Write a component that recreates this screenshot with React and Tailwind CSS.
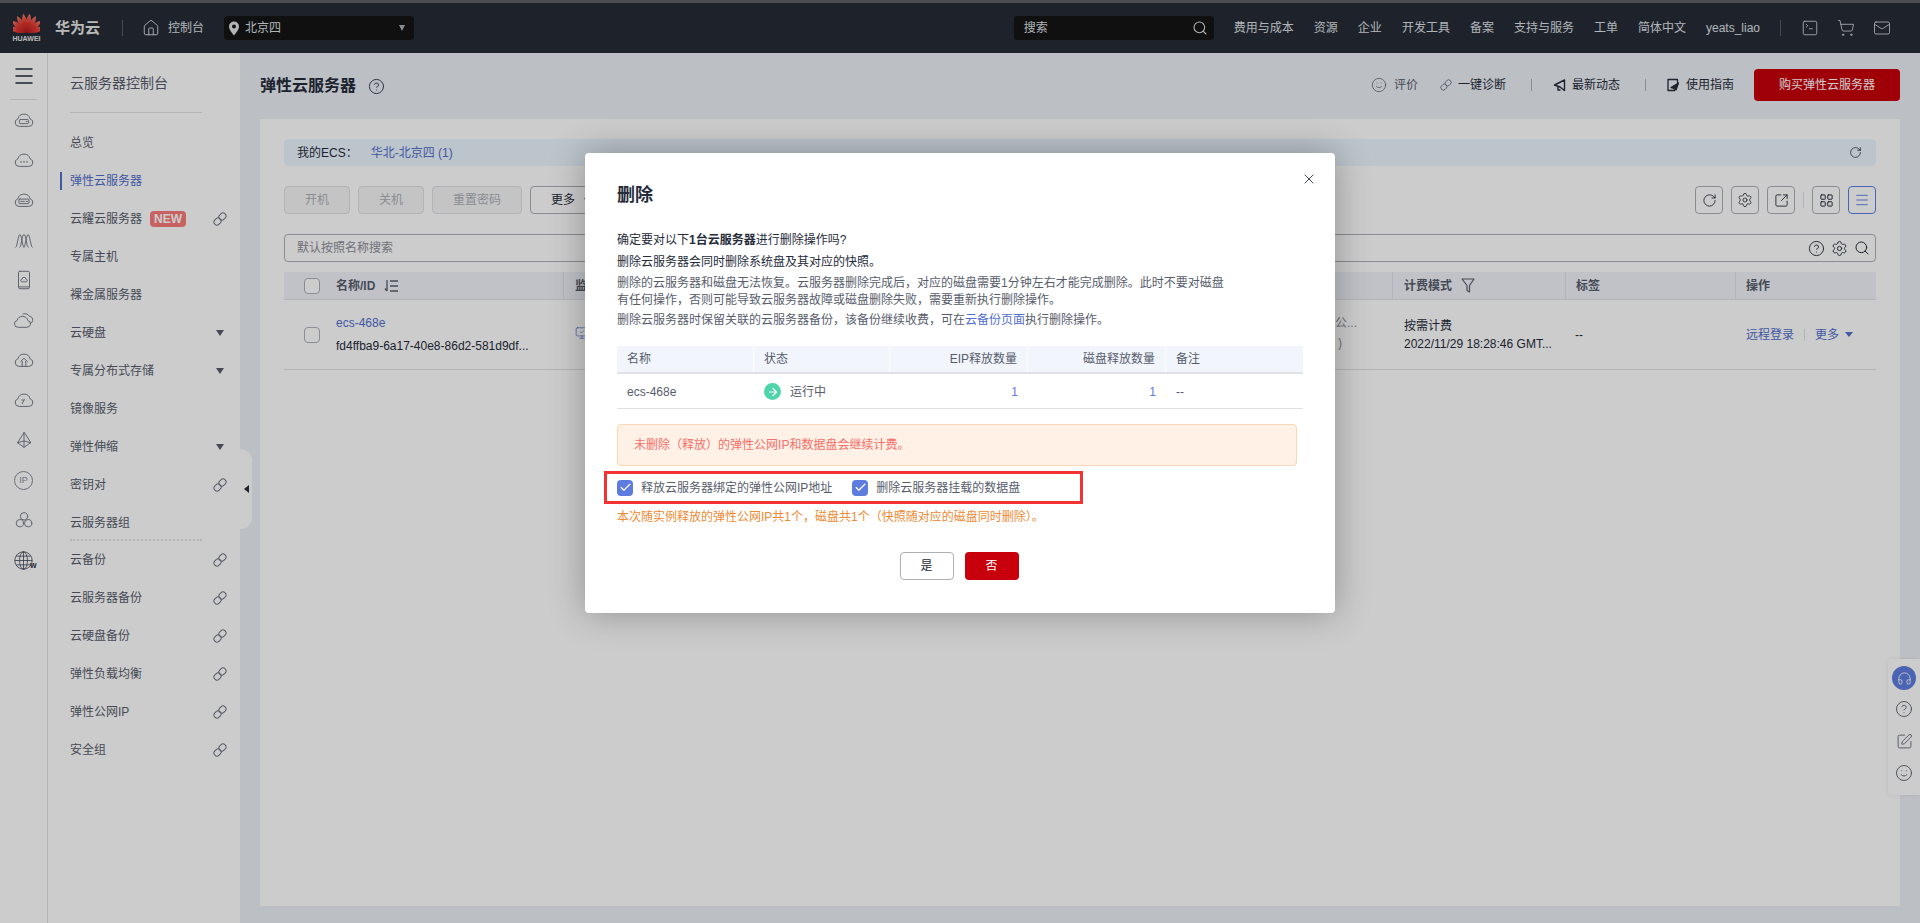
import { Home, Search, SquareTerminal, ShoppingCart, Mail, CircleHelp, Smile, RotateCw, Settings, SquareArrowOutUpRight, LayoutGrid, Menu, X, Check, ArrowRight, Headphones, SquarePen, MonitorCheck } from 'lucide-react';

const font = { fontFamily: '"Liberation Sans", "Noto Sans CJK SC", sans-serif' };

// full-width punctuation
const CM = '\uFF0C';
const LP = '\uFF08';
const RP = '\uFF09';
const CO = '\uFF1A';

const navItems = ['费用与成本', '资源', '企业', '开发工具', '备案', '支持与服务', '工单', '简体中文', 'yeats_liao'];

const sideItems = [
  { label: '总览' },
  { label: '弹性云服务器', active: true },
  { label: '云耀云服务器', badge: true, link: true },
  { label: '专属主机' },
  { label: '裸金属服务器' },
  { label: '云硬盘', arrow: true },
  { label: '专属分布式存储', arrow: true },
  { label: '镜像服务' },
  { label: '弹性伸缩', arrow: true },
  { label: '密钥对', link: true },
  { label: '云服务器组' },
];

const sideItems2 = [
  { label: '云备份', link: true },
  { label: '云服务器备份', link: true },
  { label: '云硬盘备份', link: true },
  { label: '弹性负载均衡', link: true },
  { label: '弹性公网IP', link: true },
  { label: '安全组', link: true },
];

const CLOUD = 'M6.5 19a4.2 4.2 0 0 1-1.2-8.2 6.9 6.9 0 0 1 13.4 0A4.2 4.2 0 0 1 17.5 19Z';

const railIcons = [
  <><path d={CLOUD} /><rect x="7" y="11.500" width="10" height="4.500" rx="1" /><path d="M14.500 13.700h1" /></>,
  <><path d={CLOUD} /><path d="M8.500 14h.6M11.700 14h.6M14.900 14h.6" strokeWidth="1.400" /></>,
  <><path d={CLOUD} /><rect x="6.500" y="11" width="11" height="5" rx="1" /><path d="M8.500 13.500h4M14.500 13.500h1.500" /></>,
  <path d="M3 20c2-1 2.500-14 4.500-14s2.500 14 4.500 14M7.500 20c2-1 2-14 4.500-14s2.500 14 4.500 14M12 20c1.500 0 2.500-14 4.500-14s2.500 13 4.500 14" />,
  <><rect x="6" y="2.500" width="12" height="19" rx="1.500" /><path d="M6 19.500h12" /><path d="M10 14a1.500 1.500 0 0 1 0-3 2 2 0 0 1 4 0 1.500 1.500 0 0 1 0 3Z" /></>,
  <><path d="M5.500 20a3.800 3.800 0 0 1-1-7.500 6 6 0 0 1 11.600 0 3.800 3.800 0 0 1-1 7.500Z" /><path d="M11 5.500a6 6 0 0 1 7 2.500 3.800 3.800 0 0 1 3.500 4.500 3 3 0 0 1-2.500 3" /></>,
  <><path d={CLOUD} /><path d="M8.500 13.500 12 10l3.500 3.500M10 13.500V19M14 13.500V19" /></>,
  <><path d={CLOUD} /><path d="m10 16 2.500-4.500M9.500 12h2" /></>,
  <path d="M12 4 5 15l7 5 7-5ZM12 4v16M5 15l7-2 7 2" />,
];

function RailIcon({ children }) {
  return (
    <div className="h-10 flex items-center justify-center">
      <svg width="22" height="22" viewBox="0 0 24 24" fill="none" stroke="#6c7280" strokeWidth="1" strokeLinejoin="round" strokeLinecap="round">
        {children}
      </svg>
    </div>
  );
}

function HuaweiLogo() {
  const angles = [-75, -52, -30, -10, 10, 30, 52, 75];
  return (
    <div className="w-[27px] flex flex-col items-center">
      <svg width="27" height="20" viewBox="0 0 27 20">
        <defs>
          <linearGradient id="petal" x1="0" y1="0" x2="0" y2="1">
            <stop offset="0" stopColor="#f0806a" />
            <stop offset="0.5" stopColor="#e0352f" />
            <stop offset="1" stopColor="#b01a22" />
          </linearGradient>
        </defs>
        {angles.map((a) => (
          <path key={a} d="M13.500 19.500C9.800 13 10.300 5.500 13.500 0.500 16.700 5.500 17.200 13 13.500 19.500Z" fill="url(#petal)" transform={`rotate(${a} 13.500 19.500)`} />
        ))}
      </svg>
      <span className="text-[7px] leading-[9px] text-[#e8e8e8] font-bold mt-[1px]">HUAWEI</span>
    </div>
  );
}

function LinkIcon({ size = 14, color = '#6c7280' }) {
  return (
    <svg width={size} height={size} viewBox="0 0 14 14" fill="none" stroke={color} strokeWidth="1">
      <rect x="6.500" y="0.800" width="6" height="7.500" rx="3" transform="rotate(45 9.500 4.500)" />
      <rect x="1.500" y="5.700" width="6" height="7.500" rx="3" transform="rotate(45 4.500 9.500)" />
    </svg>
  );
}

function SideRow({ item }) {
  return (
    <div className="h-[38px] flex items-center relative pl-[22px] pr-[13px]">
      {item.active && <span className="absolute left-3 top-[10px] w-[2px] h-[18px] bg-[#526ecc]" />}
      <span className={`text-xs ${item.active ? 'text-[#526ecc]' : 'text-[#575d6c]'}`}>{item.label}</span>
      {item.badge && <span className="ml-2 w-9 h-4 rounded-sm bg-[#fb7a7a] text-white text-xs font-bold flex items-center justify-center">NEW</span>}
      <span className="ml-auto flex items-center justify-center w-[14px]">
        {item.link && <LinkIcon />}
        {item.arrow && <span className="w-0 h-0 border-x-[4px] border-x-transparent border-t-[6px] border-t-[#575d6c]" />}
      </span>
    </div>
  );
}

function ToolBtn({ children, active }) {
  return (
    <button className={`w-7 h-7 flex items-center justify-center border rounded-sm ${active ? 'border-[#5e7ce0] text-[#5e7ce0]' : 'border-[#adb0b8] text-[#252b3a]'}`}>
      {children}
    </button>
  );
}

function Checkbox({ checked }) {
  if (checked) {
    return (
      <span className="w-4 h-4 rounded-sm bg-[#5e7ce0] flex items-center justify-center shrink-0">
        <Check size={13} strokeWidth={2.200} className="text-white" />
      </span>
    );
  }
  return <span className="w-4 h-4 rounded-sm border border-[#adb0b8] bg-white shrink-0" />;
}

export default function App() {
  return (
    <div className="relative h-[923px] w-[1920px] overflow-hidden flex flex-col bg-[#eceff5] text-xs text-[#252b3a]" style={font}>
      {/* top bar */}
      <header className="h-[53px] shrink-0 border-t-[3px] border-[#5f6166] bg-[#262b36] flex items-center text-[#dfe1e6]">
        <div className="ml-[13px]"><HuaweiLogo /></div>
        <span className="ml-[15px] text-[15px] font-bold text-[#e8e8e8]">华为云</span>
        <span className="ml-[22px] w-px h-4 bg-[#575d6c]" />
        <Home size={18} strokeWidth={1.200} className="ml-[19px]" />
        <span className="ml-2">控制台</span>
        <div className="ml-5 w-[190px] h-6 rounded-sm bg-[#141414] flex items-center pl-[4px] pr-[6px]">
          <svg width="12" height="15" viewBox="0 0 12 15">
            <path fillRule="evenodd" d="M6 0.500a5 5 0 0 1 5 5c0 3.500-5 9-5 9s-5-5.500-5-9a5 5 0 0 1 5-5Zm0 3a2 2 0 1 0 0 4 2 2 0 0 0 0-4Z" fill="#dfe1e6" />
          </svg>
          <span className="ml-[5px]">北京四</span>
          <span className="ml-auto mr-[3px] w-0 h-0 border-x-[3.500px] border-x-transparent border-t-[6px] border-t-[#adb0b8]" />
        </div>
        <div className="ml-auto w-[200px] h-6 rounded-sm bg-[#141414] flex items-center pl-[10px] pr-[6px]">
          <span>搜索</span>
          <Search size={16} strokeWidth={1.600} className="ml-auto" />
        </div>
        <nav className="ml-5 flex items-center gap-5">
          {navItems.map((n) => <span key={n}>{n}</span>)}
        </nav>
        <span className="ml-5 w-px h-4 bg-[#575d6c]" />
        <div className="ml-5 mr-[29px] flex items-center gap-[18px]">
          <SquareTerminal size={18} strokeWidth={1.100} />
          <ShoppingCart size={18} strokeWidth={1.100} />
          <Mail size={18} strokeWidth={1.100} />
        </div>
      </header>

      <div className="flex-1 flex min-h-0">
        {/* icon rail */}
        <aside className="w-12 shrink-0 bg-white border-r border-[#dfe1e6]">
          <div className="h-[47px] mx-[10px] border-b border-[#dfe1e6] flex items-center justify-center text-[#252b3a]">
            <Menu size={24} strokeWidth={1.500} />
          </div>
          {railIcons.map((icon, i) => <RailIcon key={i}>{icon}</RailIcon>)}
          <div className="h-10 flex items-center justify-center">
            <span className="w-[19px] h-[19px] rounded-full border border-[#8a8e99] text-[9px] text-[#8a8e99] flex items-center justify-center">IP</span>
          </div>
          <RailIcon><circle cx="12" cy="8" r="4" /><circle cx="7.500" cy="15.500" r="4" /><circle cx="16.500" cy="15.500" r="4" /></RailIcon>
          <div className="h-10 flex items-center justify-center relative">
            <svg width="19" height="19" viewBox="0 0 24 24" fill="none" stroke="#3c4252" strokeWidth="1">
              <circle cx="12" cy="12" r="11" />
              <ellipse cx="12" cy="12" rx="5" ry="11" />
              <path d="M1 12h22M3 6.500h18M3 17.500h18M12 1v22" />
            </svg>
            <span className="absolute left-[30px] top-[22px] text-[7px] leading-[8px] font-bold text-[#252b3a]">W</span>
          </div>
        </aside>

        {/* service menu */}
        <aside className="w-48 shrink-0 bg-white relative">
          <div className="h-[60px] ml-[22px] w-[132px] border-b border-[#dfe1e6] flex items-center text-sm text-[#575d6c]">云服务器控制台</div>
          <div className="mt-[11px]">
            {sideItems.map((s) => <SideRow key={s.label} item={s} />)}
            <div className="ml-[22px] w-[132px] -mt-[3px] border-t-2 border-dotted border-[#dfe1e6]" />
            {sideItems2.map((s) => <SideRow key={s.label} item={s} />)}
          </div>
          <div className="absolute left-full top-[396px] w-3 h-20 bg-white rounded-r-xl flex items-center justify-center">
            <span className="w-0 h-0 border-y-[4px] border-y-transparent border-r-[5px] border-r-[#252b3a]" />
          </div>
        </aside>

        {/* main */}
        <main className="flex-1 min-w-0 px-5">
          <div className="h-[66px] flex items-center">
            <h1 className="text-base font-bold">弹性云服务器</h1>
            <CircleHelp size={17} strokeWidth={1.400} className="ml-[12px] text-[#3c4252]" />
            <div className="ml-auto flex items-center text-[#252b3a] -mt-[2px]">
              <Smile size={16} strokeWidth={1.100} className="text-[#575d6c]" />
              <span className="ml-[7px] text-[#575d6c]">评价</span>
              <span className="ml-[22px]"><LinkIcon size={12} /></span>
              <span className="ml-[6px]">一键诊断</span>
              <span className="ml-[25px] w-px h-3 bg-[#adb0b8]" />
              <svg className="ml-[21px]" width="14" height="14" viewBox="0 0 14 14" fill="none" stroke="#252b3a" strokeWidth="1.400" strokeLinejoin="round">
                <path d="M1.500 7 11.500 2v10.500l-4.500-3.500L1.500 7ZM5 9v3h2.500" />
              </svg>
              <span className="ml-[5px]">最新动态</span>
              <span className="ml-[25px] w-px h-3 bg-[#adb0b8]" />
              <svg className="ml-5" width="14" height="14" viewBox="0 0 14 14" fill="none" stroke="#252b3a" strokeWidth="1.300" strokeLinejoin="round">
                <path d="M11.500 5V1.500h-9.500v11h7" />
                <path d="M5 9.500 12.500 5 10 12 7 10Z" fill="#252b3a" />
              </svg>
              <span className="ml-[6px]">使用指南</span>
              <button className="ml-5 w-[146px] h-8 rounded-sm bg-[#c7000b] text-white text-xs">购买弹性云服务器</button>
            </div>
          </div>

          <section className="h-[787px] bg-white px-6 pt-5">
            <div className="h-[27px] rounded-sm bg-[#ebf6ff] flex items-center pl-[13px] pr-[14px]">
              <span>我的ECS{CO}</span>
              <span className="ml-[13px] text-[#526ecc]">华北-北京四 (1)</span>
              <RotateCw size={13} strokeWidth={1.400} className="ml-auto" />
            </div>

            <div className="mt-5 h-7 flex items-center">
              <button className="w-[66px] h-7 border border-[#dfe1e6] rounded-sm bg-[#f5f5f6] text-[#adb0b8]">开机</button>
              <button className="ml-2 w-[66px] h-7 border border-[#dfe1e6] rounded-sm bg-[#f5f5f6] text-[#adb0b8]">关机</button>
              <button className="ml-2 w-[90px] h-7 border border-[#dfe1e6] rounded-sm bg-[#f5f5f6] text-[#adb0b8]">重置密码</button>
              <button className="ml-2 w-[76px] h-7 border border-[#adb0b8] rounded-sm flex items-center pl-5">
                更多
                <span className="ml-[9px] w-0 h-0 border-x-[3.500px] border-x-transparent border-t-[5px] border-t-[#575d6c]" />
              </button>
              <div className="ml-auto flex items-center gap-2">
                <ToolBtn><RotateCw size={15} strokeWidth={1.400} /></ToolBtn>
                <ToolBtn><Settings size={16} strokeWidth={1.200} /></ToolBtn>
                <ToolBtn><SquareArrowOutUpRight size={15} strokeWidth={1.400} /></ToolBtn>
                <span className="w-px h-4 bg-[#dfe1e6]" />
                <ToolBtn><LayoutGrid size={15} strokeWidth={1.600} /></ToolBtn>
                <ToolBtn active><Menu size={16} strokeWidth={1.400} /></ToolBtn>
              </div>
            </div>

            <div className="mt-5 h-7 border border-[#adb0b8] rounded-sm flex items-center pl-3 pr-[5px] text-[#8a8e99]">
              <span>默认按照名称搜索</span>
              <div className="ml-auto flex items-center gap-[6px] text-[#252b3a]">
                <CircleHelp size={17} strokeWidth={1.300} />
                <Settings size={17} strokeWidth={1.300} />
                <Search size={16} strokeWidth={1.500} />
              </div>
            </div>

            <div className="mt-[10px] grid grid-cols-[280px_828px_173px_170px_141px] h-7 bg-[#f0f3fa] text-[#575d6c] font-bold items-center border-b border-[#dfe1e6]">
              <div className="flex items-center pl-5 h-full border-r border-[#dfe1e6]">
                <Checkbox />
                <span className="ml-4">名称/ID</span>
                <svg className="ml-[9px]" width="15" height="14" viewBox="0 0 15 14" fill="none" stroke="#575d6c" strokeWidth="1.300">
                  <path d="M3 1v11M1 9.500 3 12M6 2h8M6 7h8M6 12h8" />
                </svg>
              </div>
              <div className="pl-[11px] h-full flex items-center">监控</div>
              <div className="pl-[11px] h-full flex items-center border-l border-[#dfe1e6]">
                计费模式
                <svg className="ml-[9px]" width="14" height="15" viewBox="0 0 14 15" fill="none" stroke="#575d6c" strokeWidth="1.200" strokeLinejoin="round">
                  <path d="M1 1h12L8.500 7.500V14L6 12.500V7.500Z" />
                </svg>
              </div>
              <div className="pl-[10px] h-full flex items-center border-l border-[#dfe1e6]">标签</div>
              <div className="pl-[10px] h-full flex items-center border-l border-[#dfe1e6]">操作</div>
            </div>

            <div className="grid grid-cols-[280px_828px_173px_170px_141px] h-[70px] border-b border-[#dfe1e6] items-center">
              <div className="flex items-center pl-5">
                <Checkbox />
                <div className="ml-4">
                  <div className="text-[#526ecc] leading-[16px]">ecs-468e</div>
                  <div className="mt-[7px] leading-[16px] whitespace-nowrap">fd4ffba9-6a17-40e8-86d2-581d9df...</div>
                </div>
              </div>
              <div className="h-full flex justify-between pl-[11px] pr-[35px]">
                <MonitorCheck size={14} strokeWidth={1.200} className="mt-[26px] text-[#526ecc]" />
                <div className="text-[#8a8e99] text-right pt-[15px] leading-[16px]">
                  <div>公...</div>
                  <div className="mt-1 pr-[15px]">)</div>
                </div>
              </div>
              <div className="pl-3">
                <div className="leading-[16px]">按需计费</div>
                <div className="mt-[2px] leading-[16px] whitespace-nowrap">2022/11/29 18:28:46 GMT...</div>
              </div>
              <div className="pl-[10px]">--</div>
              <div className="pl-[11px] flex items-center text-[#526ecc]">
                <span>远程登录</span>
                <span className="ml-[10px] w-px h-3 bg-[#dfe1e6]" />
                <span className="ml-[10px]">更多</span>
                <span className="ml-[6px] w-0 h-0 border-x-[4px] border-x-transparent border-t-[5px] border-t-[#526ecc]" />
              </div>
            </div>
          </section>
        </main>
      </div>

      {/* floating help strip */}
      <div className="absolute right-0 top-[659px] w-8 h-[136px] bg-white rounded-l-sm shadow-[0_0_4px_rgba(0,0,0,0.08)] flex flex-col items-center text-[#575d6c]">
        <span className="mt-[7px] w-6 h-6 rounded-full bg-[#5e7ce0] flex items-center justify-center">
          <Headphones size={15} strokeWidth={1.400} className="text-white" />
        </span>
        <CircleHelp size={18} strokeWidth={1.200} className="mt-[10px]" />
        <SquarePen size={17} strokeWidth={1.200} className="mt-[15px]" />
        <Smile size={18} strokeWidth={1.200} className="mt-[14px]" />
      </div>

      {/* dialog mask */}
      <div className="absolute inset-0 bg-black/20" />

      <div className="absolute left-[585px] top-[153px] w-[750px] h-[460px] bg-white rounded-sm shadow-[0_0_36px_rgba(0,0,0,0.3)] px-8 text-[#575d6c]">
        <X size={16} strokeWidth={1.300} className="absolute right-[18px] top-[18px] text-[#252b3a]" />
        <h2 className="pt-[30px] text-lg leading-6 font-bold text-[#252b3a]">删除</h2>
        <p className="mt-[25px] leading-4 text-[#252b3a]">确定要对以下<b>1台云服务器</b>进行删除操作吗?</p>
        <p className="mt-[6px] leading-4 text-[#252b3a]">删除云服务器会同时删除系统盘及其对应的快照。</p>
        <p className="mt-[5px] leading-[17px]">
          删除的云服务器和磁盘无法恢复。云服务器删除完成后{CM}对应的磁盘需要1分钟左右才能完成删除。此时不要对磁盘<br />
          有任何操作{CM}否则可能导致云服务器故障或磁盘删除失败{CM}需要重新执行删除操作。
        </p>
        <p className="mt-[3px] leading-4">删除云服务器时保留关联的云服务器备份{CM}该备份继续收费{CM}可在<span className="text-[#526ecc]">云备份页面</span>执行删除操作。</p>

        <div className="mt-[18px] w-[686px]">
          <div className="grid grid-cols-[137px_136px_138px_138px_137px] h-7 items-center bg-[#f2f5fc] border-b-2 border-[#dfe1e6]">
            <div className="px-[10px] h-full flex items-center border-r border-white">名称</div>
            <div className="px-[10px] h-full flex items-center border-r border-white">状态</div>
            <div className="px-[10px] h-full flex items-center justify-end border-r border-white">EIP释放数量</div>
            <div className="px-[10px] h-full flex items-center justify-end border-r border-white">磁盘释放数量</div>
            <div className="px-[10px] h-full flex items-center">备注</div>
          </div>
          <div className="grid grid-cols-[137px_136px_138px_138px_137px] h-[35px] pt-[1px] items-center border-b border-[#dfe1e6]">
            <div className="px-[10px]">ecs-468e</div>
            <div className="px-[10px] flex items-center">
              <span className="w-[17px] h-[17px] rounded-full bg-[#50d4ab] flex items-center justify-center">
                <ArrowRight size={12} strokeWidth={2.200} className="text-white" />
              </span>
              <span className="ml-[9px]">运行中</span>
            </div>
            <div className="px-[10px] text-right text-[#5e7ce0]">1</div>
            <div className="px-[10px] text-right text-[#5e7ce0]">1</div>
            <div className="px-[10px]">--</div>
          </div>
        </div>

        <div className="mt-[15px] w-[680px] h-[42px] rounded-sm border border-[#fad7b4] bg-[#fff1e6] flex items-center pl-4 text-[#f66f6a]">
          未删除{LP}释放{RP}的弹性公网IP和数据盘会继续计费。
        </div>

        <div className="mt-[5px] -ml-[13px] w-[479px] h-[33px] border-[3px] border-[#f33232] flex items-center pl-[10px]">
          <Checkbox checked />
          <span className="ml-2">释放云服务器绑定的弹性公网IP地址</span>
          <span className="ml-[20px]"><Checkbox checked /></span>
          <span className="ml-2">删除云服务器挂载的数据盘</span>
        </div>

        <p className="mt-[5px] leading-4 text-[#ee8a33]">本次随实例释放的弹性公网IP共1个{CM}磁盘共1个{LP}快照随对应的磁盘同时删除{RP}。</p>

        <div className="mt-[27px] flex justify-center gap-[11px] -ml-[2px]">
          <button className="w-[54px] h-7 rounded-sm border border-[#adb0b8] text-[#252b3a]">是</button>
          <button className="w-[54px] h-7 rounded-sm bg-[#c7000b] text-white">否</button>
        </div>
      </div>
    </div>
  );
}
